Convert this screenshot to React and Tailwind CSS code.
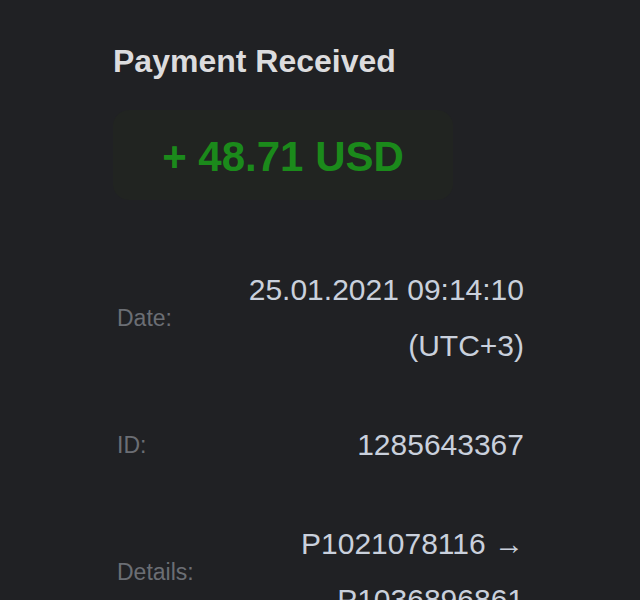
export default function App() {
  const font = { fontFamily: '"Liberation Sans", Arial, Helvetica, sans-serif' };
  return (
    <div className="min-h-[600px] w-full bg-[#202124] overflow-hidden" style={font}>
      <div className="ml-[111px] w-[413px] pt-[41px] flex flex-col">
        <h1 className="pl-[2px] text-[32px] leading-[40px] font-bold text-[#dcdcde]">Payment Received</h1>
        <div className="mt-[29px] ml-[2px] w-[340px] h-[90px] rounded-[16px] bg-[#212421] flex items-center justify-center">
          <span className="text-[42px] leading-none font-bold text-[#1b8a1b] mt-[4px]">+ 48.71 USD</span>
        </div>
        <div className="mt-[62px] flex flex-col gap-[43px]">
          <div className="flex items-center justify-between">
            <span className="pl-[6px] text-[23px] text-[#6b6e74]">Date:</span>
            <div className="text-right text-[30px] leading-[56px] text-[#c9d0dc]">
              <div>25.01.2021 09:14:10</div>
              <div>(UTC+3)</div>
            </div>
          </div>
          <div className="flex items-center justify-between">
            <span className="pl-[6px] text-[23px] text-[#6b6e74]">ID:</span>
            <div className="text-right text-[30px] leading-[56px] text-[#c9d0dc]">1285643367</div>
          </div>
          <div className="flex items-center justify-between">
            <span className="pl-[6px] text-[23px] text-[#6b6e74]">Details:</span>
            <div className="text-right text-[30px] leading-[56px] text-[#c9d0dc]">
              <div>P1021078116 →</div>
              <div>P1036896861</div>
            </div>
          </div>
        </div>
      </div>
    </div>
  );
}
